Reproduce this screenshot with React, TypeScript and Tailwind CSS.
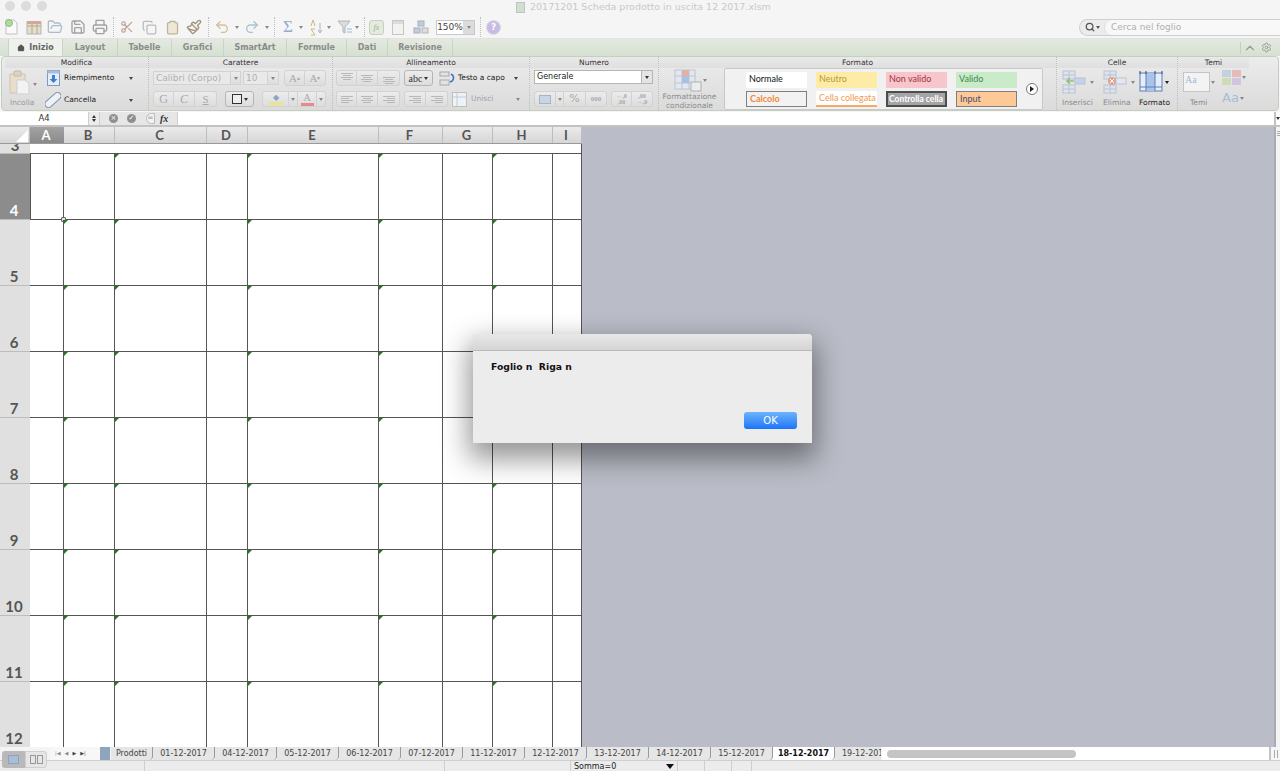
import React from "react";
import {
  Scissors,
  Copy,
  Save,
  Printer,
  Undo2,
  Redo2,
  FolderOpen,
  Paintbrush,
  Search,
  Settings,
  ChevronUp,
  Home,
  Clipboard,
} from "lucide-react";

const colWidths = [34, 51, 92, 41, 131, 64, 50, 60, 29];
const colNames = ["A", "B", "C", "D", "E", "F", "G", "H", "I"];
const rows = [4, 5, 6, 7, 8, 9, 10, 11, 12];
const markedCols = ["B", "C", "E", "F", "H"];
const ribbonTabs = [
  { name: "Layout", w: 55 },
  { name: "Tabelle", w: 54 },
  { name: "Grafici", w: 52 },
  { name: "SmartArt", w: 63 },
  { name: "Formule", w: 60 },
  { name: "Dati", w: 41 },
  { name: "Revisione", w: 65 },
];
const sheets = [
  "01-12-2017",
  "04-12-2017",
  "05-12-2017",
  "06-12-2017",
  "07-12-2017",
  "11-12-2017",
  "12-12-2017",
  "13-12-2017",
  "14-12-2017",
  "15-12-2017",
  "18-12-2017",
];

const Arrow = ({ className = "" }: { className?: string }) => (
  <span
    className={`block w-0 h-0 border-x-[2.5px] border-x-transparent border-t-[3px] border-t-[#888] ${className}`}
  />
);

const Sep = ({ className = "" }: { className?: string }) => (
  <span className={`block w-0 border-l border-dotted border-[#bdbdbd] ${className}`} />
);

const GroupTitle = ({ children }: { children: React.ReactNode }) => (
  <div className="h-[11px] leading-[11px] text-center text-[7.5px] text-[#333] bg-gradient-to-b from-[#e9e9e9] to-[#dfdfdf]">
    {children}
  </div>
);

const Seg = ({ className = "", children }: { className?: string; children?: React.ReactNode }) => (
  <div
    className={`flex items-center justify-center h-[16px] border border-[#d2d2d2] bg-gradient-to-b from-[#ececec] to-[#dddddd] text-[#a9a9a9] ${className}`}
  >
    {children}
  </div>
);

const Lines = ({ align }: { align: "l" | "c" | "r" }) => {
  const a = align === "l" ? "items-start" : align === "c" ? "items-center" : "items-end";
  return (
    <div className={`flex flex-col gap-[1px] w-[12px] ${a}`}>
      <span className="block h-px w-[12px] bg-[#b8b8b8]" />
      <span className="block h-px w-[8px] bg-[#b8b8b8]" />
      <span className="block h-px w-[12px] bg-[#b8b8b8]" />
      <span className="block h-px w-[8px] bg-[#b8b8b8]" />
    </div>
  );
};

const Style = ({ label, className }: { label: string; className: string }) => (
  <div
    className={`w-[61px] h-[16px] pl-[3px] leading-[14px] text-[9px] whitespace-nowrap overflow-hidden font-['Lato',sans-serif] ${className}`}
  >
    {label}
  </div>
);

const GridIcon = ({ tint, kind }: { tint: string; kind: "add" | "del" }) => (
  <svg width="24" height="24" viewBox="0 0 24 24">
    <rect x="1" y="1" width="12" height="8" fill="#dde3ec" stroke="#b9c3d1" />
    <rect x="1" y="15" width="12" height="8" fill="#dde3ec" stroke="#b9c3d1" />
    <path d="M7 1v8M1 5h12M7 15v8M1 19h12" stroke="#b9c3d1" fill="none" />
    <rect x="13" y="8" width="10" height="6" fill={tint} stroke="#b9c3d1" />
    {kind === "add" ? (
      <path d="M12 11H5m3-3l-3 3 3 3" fill="none" stroke="#8fc27a" strokeWidth="1.6" />
    ) : (
      <g>
        <circle cx="9" cy="11" r="4" fill="#dba497" />
        <path d="M7 9l4 4m0-4l-4 4" stroke="#fff" />
      </g>
    )}
  </svg>
);

const Toolbar = () => (
  <div className="h-[22px] flex items-center text-[#a2a2a2] relative">
    <svg className="ml-[4px]" width="15" height="16" viewBox="0 0 15 16">
      <path d="M2 1h8l3 3v11H2z" fill="#fafafa" stroke="#c2c2c2" />
      <circle cx="5" cy="4" r="3.5" fill="#aedb9e" stroke="#8dbd7e" />
    </svg>
    <svg className="ml-[7px]" width="16" height="15" viewBox="0 0 16 15">
      <rect x="1" y="2" width="14" height="12" fill="#e5decd" stroke="#b4b4b4" />
      <path d="M1 6h14M6 2v12M11 2v12" stroke="#b5a88e" />
      <rect x="1" y="1" width="14" height="3" fill="#d4a79b" />
    </svg>
    <FolderOpen className="ml-[5px] text-[#aebcc7]" size={16} />
    <Save className="ml-[7px]" size={16} />
    <Printer className="ml-[6px]" size={16} />
    <Sep className="h-[20px] ml-[5px]" />
    <Scissors className="ml-[6px] text-[#bd9c90]" size={14} />
    <Copy className="ml-[8px] text-[#bbb]" size={15} />
    <Clipboard className="ml-[8px] text-[#c0b299]" size={15} fill="#eee7d8" />
    <Paintbrush className="ml-[6px] text-[#a3937a]" size={16} />
    <Sep className="h-[20px] ml-[6px]" />
    <Undo2 className="ml-[5px] text-[#d2c29c]" size={16} />
    <Arrow className="ml-[5px]" />
    <Redo2 className="ml-[5px] text-[#abc1d0]" size={16} />
    <Arrow className="ml-[5px]" />
    <Sep className="h-[20px] ml-[5px]" />
    <span className="ml-[8px] w-[10px] font-['Liberation_Serif',serif] text-[17px] leading-[16px] text-[#8fabcd]">Σ</span>
    <Arrow className="ml-[6px]" />
    <svg className="ml-[5px]" width="16" height="17" viewBox="0 0 16 17">
      <path d="M3 7l2-6 2 6M3 16h4L3 10h4" fill="none" stroke="#cdb987" />
      <path d="M12 4v9m-2-2l2 3 2-3" fill="none" stroke="#a2b6c8" />
    </svg>
    <Arrow className="ml-[3px]" />
    <svg className="ml-[6px]" width="16" height="14" viewBox="0 0 16 14">
      <path d="M1 1h12L8 7v6L6 12V7z" fill="#d8dde1" stroke="#b4b4b4" />
      <path d="M10 9h5M10 12h5" stroke="#9cbbd8" />
    </svg>
    <Arrow className="ml-[2px]" />
    <Sep className="h-[20px] ml-[5px]" />
    <div className="ml-[4px] w-[15px] h-[15px] rounded-[3px] border border-[#c6d1bd] bg-[#e4ebde] text-[8px] italic text-center leading-[13px] text-[#9aad8c] font-['Liberation_Serif',serif]">
      fx
    </div>
    <div className="ml-[8px] w-[12px] h-[15px] border border-[#c6c6c6] bg-[#f2f2f2]">
      <div className="h-[3px] bg-[#dcdcdc]" />
    </div>
    <svg className="ml-[9px]" width="16" height="14" viewBox="0 0 16 14">
      <rect x="5" y="1" width="6" height="5" fill="#c3cdd9" stroke="#a4b0c1" />
      <rect x="1" y="8" width="6" height="5" fill="#c3cdd9" stroke="#a4b0c1" />
      <rect x="9" y="8" width="6" height="5" fill="#ddd" stroke="#b4b4b4" />
    </svg>
    <div className="ml-[7px] w-[39px] h-[15px] flex border border-[#c9c9c9] bg-white text-[9px] leading-[13px] text-[#444]">
      <span className="w-[26px] text-center">150%</span>
      <span className="flex-1 flex items-center justify-center bg-[#dcdcdc]">
        <Arrow />
      </span>
    </div>
    <Sep className="h-[20px] ml-[5px]" />
    <div className="ml-[5px] w-[15px] h-[15px] rounded-full border border-[#ddd] bg-[#c9bce4] text-[9px] font-bold leading-[13px] text-center text-white">
      ?
    </div>
    <div className="ml-auto w-[201px] h-[17px] flex items-center rounded-l-full border border-r-0 border-[#cfcfcf] bg-[#ececec]">
      <Search className="ml-[5px] text-[#555]" size={10} strokeWidth={3} />
      <Arrow className="ml-[1px] !border-t-[#555]" />
      <div className="ml-[4px] flex-1 h-full rounded-l-full bg-[#f8f8f8] border-l border-[#ddd] pl-[6px] text-[9px] leading-[15px] text-[#b0b0b0]">
        Cerca nel foglio
      </div>
    </div>
  </div>
);

const RibbonTabs = () => (
  <div className="h-[18px] flex bg-gradient-to-b from-[#e4e9e0] to-[#d6e1d2] border-t border-[#e2e2e2] text-[8px] font-bold text-[#8b8b8b]">
    <div className="ml-[8px] w-[55px] flex items-center justify-center gap-[4px] bg-[#eef1ec] border-x border-[#c9d4c4] text-[#666]">
      <Home size={8} fill="#555" strokeWidth={1} />
      Inizio
    </div>
    {ribbonTabs.map((t) => (
      <div
        key={t.name}
        style={{ width: t.w }}
        className="flex items-center justify-center border-r border-[#c9d4c4]"
      >
        {t.name}
      </div>
    ))}
    <div className="ml-auto flex items-center text-[#999]">
      <Sep className="h-[12px] !border-solid !border-[#c5cec1]" />
      <ChevronUp className="ml-[2px]" size={14} />
      <Settings className="ml-[4px]" size={11} />
      <span className="w-[8px]" />
    </div>
  </div>
);

const Ribbon = () => (
  <div className="h-[55px] mx-[1px] flex rounded-[4px] border border-[#c4cfc0] bg-gradient-to-b from-[#ececec] to-[#dbdbdb] text-[#444] overflow-hidden">
    {/* Modifica */}
    <div className="w-[143px] ml-[3px]">
      <GroupTitle>Modifica</GroupTitle>
      <div className="flex">
        <div className="w-[37px] pl-[4px] pt-[2px]">
          <div className="flex items-center">
            <svg width="21" height="25" viewBox="0 0 21 25">
              <path d="M1 4h15v19H1z" fill="#e8decb" stroke="#cfc3ab" />
              <rect x="5" y="1" width="7" height="5" rx="1" fill="#d9d3c8" stroke="#c2b9a8" />
              <path d="M8 10h8l4 4v10H8z" fill="#f3f3f3" stroke="#cfcfcf" />
            </svg>
            <Arrow className="ml-[3px] mt-[3px]" />
          </div>
          <div className="text-[7.5px] text-[#999] mt-[2px] pl-[1px]">Incolla</div>
        </div>
        <div className="flex-1 text-[7.5px] text-[#222]">
          <div className="flex items-center h-[16px] mt-[2px]">
            <svg className="ml-[5px]" width="13" height="16" viewBox="0 0 13 16">
              <rect x="0.5" y="0.5" width="12" height="15" fill="#e6edf6" stroke="#7d9bc2" />
              <rect x="0.5" y="0.5" width="12" height="3" fill="#a8bfdb" />
              <path d="M5 5h3v4h2.5l-4 4-4-4H5z" fill="#3f7fd0" />
            </svg>
            <span className="ml-[4px]">Riempimento</span>
            <Arrow className="ml-auto mr-[15px] !border-t-[#444]" />
          </div>
          <div className="flex items-center h-[16px] mt-[6px]">
            <svg className="ml-[3px]" width="16" height="16" viewBox="0 0 16 16">
              <rect x="-1.5" y="4.5" width="19" height="7" rx="3.5" transform="rotate(-42 8 8)" fill="#eef1f5" stroke="#7d93ad" />
            </svg>
            <span className="ml-[3px]">Cancella</span>
            <Arrow className="ml-auto mr-[15px] !border-t-[#444]" />
          </div>
        </div>
      </div>
    </div>
    <Sep className="h-full" />
    {/* Carattere */}
    <div className="w-[183px]">
      <GroupTitle>Carattere</GroupTitle>
      <div className="px-[4px] pt-[2px] text-[9px] text-[#b0b0b0]">
        <div className="flex items-center h-[16px]">
          <div className="w-[78px] h-[14px] pl-[2px] leading-[13px] bg-[#e9e9e9] border border-[#d2d2d2]">Calibri (Corpo)</div>
          <Seg className="w-[10px] !h-[14px] !border-l-0"><Arrow /></Seg>
          <div className="ml-[2px] w-[25px] h-[14px] pl-[2px] leading-[13px] bg-[#e9e9e9] border border-[#d2d2d2]">10</div>
          <Seg className="w-[11px] !h-[14px] !border-l-0"><Arrow /></Seg>
          <Seg className="ml-[5px] w-[21px] rounded-l-[3px] text-[11px] font-['Liberation_Serif',serif]">A<span className="text-[6px]">▴</span></Seg>
          <Seg className="w-[21px] rounded-r-[3px] !border-l-0 text-[11px] font-['Liberation_Serif',serif]">A<span className="text-[6px]">▾</span></Seg>
        </div>
        <div className="flex items-center mt-[5px] font-['Liberation_Serif',serif] text-[12px]">
          <Seg className="w-[21px] rounded-l-[3px]">G</Seg>
          <Seg className="w-[21px] !border-l-0 italic">C</Seg>
          <Seg className="w-[22px] rounded-r-[3px] !border-l-0 underline text-[11px]">S</Seg>
          <Seg className="ml-[8px] w-[29px] rounded-[3px] !border-[#b5b5b5] gap-[2px]">
            <span className="block w-[10px] h-[10px] border border-[#333] bg-[#eee]" />
            <Arrow className="!border-t-[#333]" />
          </Seg>
          <Seg className="ml-[8px] w-[27px] rounded-l-[3px] gap-[2px]">
            <span className="flex flex-col items-center">
              <span className="text-[8px] leading-[9px] text-[#8ba5c4]">◆</span>
              <span className="block w-[14px] h-[3px] bg-[#ece38a]" />
            </span>
          </Seg>
          <Seg className="w-[9px] !border-l-0"><Arrow /></Seg>
          <Seg className="w-[19px] !border-l-0">
            <span className="flex flex-col items-center">
              <span className="text-[10px] leading-[10px]">A</span>
              <span className="block w-[13px] h-[3px] bg-[#e58a88]" />
            </span>
          </Seg>
          <Seg className="w-[9px] rounded-r-[3px] !border-l-0"><Arrow /></Seg>
        </div>
      </div>
    </div>
    <Sep className="h-full" />
    {/* Allineamento */}
    <div className="w-[196px]">
      <GroupTitle>Allineamento</GroupTitle>
      <div className="px-[3px] pt-[2px]">
        <div className="flex items-center">
          <Seg className="w-[21px] rounded-l-[3px] !items-start pt-[2px]"><Lines align="c" /></Seg>
          <Seg className="w-[21px] !border-l-0"><Lines align="c" /></Seg>
          <Seg className="w-[22px] rounded-r-[3px] !border-l-0 !items-end pb-[1px]"><Lines align="c" /></Seg>
          <Seg className="ml-[4px] w-[29px] rounded-[3px] !border-[#b5b5b5] !text-[#333] text-[10px] font-['Liberation_Serif',serif] gap-[2px]">
            abc<Arrow className="!border-t-[#333]" />
          </Seg>
          <svg className="ml-[6px]" width="16" height="15" viewBox="0 0 16 15">
            <rect x="1" y="1" width="9" height="4" fill="#e3e3e3" stroke="#a8a8a8" />
            <rect x="1" y="9" width="9" height="5" fill="#e3e3e3" stroke="#a8a8a8" />
            <path d="M12 3c4 2 3 7-1 8" fill="none" stroke="#3d77c4" strokeWidth="1.5" />
          </svg>
          <span className="ml-[3px] text-[7.5px] text-[#222]">Testo a capo</span>
          <Arrow className="ml-[9px] !border-t-[#444]" />
        </div>
        <div className="flex items-center mt-[5px]">
          <Seg className="w-[21px] rounded-l-[3px]"><Lines align="l" /></Seg>
          <Seg className="w-[21px] !border-l-0"><Lines align="c" /></Seg>
          <Seg className="w-[22px] rounded-r-[3px] !border-l-0"><Lines align="r" /></Seg>
          <Seg className="ml-[4px] w-[22px] rounded-l-[3px]"><Lines align="r" /></Seg>
          <Seg className="w-[22px] rounded-r-[3px] !border-l-0"><Lines align="r" /></Seg>
          <svg className="ml-[4px]" width="15" height="15" viewBox="0 0 15 15">
            <rect x="0.5" y="0.5" width="14" height="14" fill="#eef2f6" stroke="#bfbfbf" />
            <path d="M5 0.5v14M0.5 5h14" stroke="#bfcbd8" />
          </svg>
          <span className="ml-[4px] text-[7.5px] text-[#a2a2a2]">Unisci</span>
          <Arrow className="ml-[23px]" />
        </div>
      </div>
    </div>
    <Sep className="h-full" />
    {/* Numero */}
    <div className="w-[128px]">
      <GroupTitle>Numero</GroupTitle>
      <div className="px-[4px] pt-[2px]">
        <div className="flex h-[14px] w-[119px] border border-[#b5b5b5] bg-white text-[8px] leading-[12px] text-[#222]">
          <span className="flex-1 pl-[2px]">Generale</span>
          <span className="w-[11px] flex items-center justify-center bg-[#e4e4e4] border-l border-[#b5b5b5]">
            <Arrow className="!border-t-[#333]" />
          </span>
        </div>
        <div className="flex items-center mt-[7px]">
          <Seg className="w-[22px] rounded-l-[3px]">
            <span className="block w-[12px] h-[9px] border border-[#9fb6cc] bg-[#c8d6e3]" />
          </Seg>
          <Seg className="w-[8px] !border-l-0"><Arrow /></Seg>
          <Seg className="w-[22px] !border-l-0 text-[11px]">%</Seg>
          <Seg className="w-[21px] rounded-r-[3px] !border-l-0 text-[7px] font-bold font-['Liberation_Serif',serif]">000</Seg>
          <Seg className="ml-[4px] w-[21px] rounded-l-[3px] flex-col text-[6px] leading-[6px] font-bold font-['Liberation_Serif',serif]">
            <span>←,0</span>
            <span>,00</span>
          </Seg>
          <Seg className="w-[21px] rounded-r-[3px] !border-l-0 flex-col text-[6px] leading-[6px] font-bold font-['Liberation_Serif',serif]">
            <span>,00</span>
            <span>→,0</span>
          </Seg>
        </div>
      </div>
    </div>
    <Sep className="h-full" />
    {/* Formato */}
    <div className="w-[397px]">
      <GroupTitle>Formato</GroupTitle>
      <div className="flex">
        <div className="w-[65px] flex flex-col items-center pt-[1px] pr-[4px] text-[7.5px] leading-[9px] text-[#8a8a8a]">
          <div className="flex items-center h-[22px] ml-[2px]">
            <svg width="28" height="23" viewBox="0 0 28 23">
              <rect x="1" y="1" width="20" height="19" fill="#e3e8f0" stroke="#bcc4d1" />
              <path d="M8 1v19M15 1v19M1 7h20M1 14h20" stroke="#bcc4d1" />
              <rect x="8" y="1" width="7" height="6" fill="#dfb1a9" />
              <rect x="8" y="7" width="7" height="7" fill="#aac0e0" />
              <rect x="17" y="13" width="10" height="9" fill="#ececec" stroke="#b0b0b0" />
            </svg>
            <Arrow className="ml-[1px]" />
          </div>
          <div className="mt-[1px] text-center">
            Formattazione
            <br />
            condizionale
          </div>
        </div>
        <div className="w-[319px] h-[42px] flex flex-col gap-[3px] pt-[3px] pl-[21px] relative border border-[#c8c8c8] rounded-[2px] bg-[#f1f1f1]">
          <div className="flex gap-[9px]">
            <Style label="Normale" className="bg-white text-[#111]" />
            <Style label="Neutro" className="bg-[#fdeca6] text-[#b99a3c]" />
            <Style label="Non valido" className="bg-[#f6c6cc] text-[#a7323a]" />
            <Style label="Valido" className="bg-[#c9ebc9] text-[#3f8a45]" />
          </div>
          <div className="flex gap-[9px]">
            <Style label="Calcolo" className="bg-[#f2f2f2] border border-[#7f7f7f] text-[#ee8a3a] font-bold !leading-[13px]" />
            <Style label="Cella collegata" className="bg-white border-b-2 border-[#f4a86a] text-[#f09a4f]" />
            <Style label="Controlla cella" className="bg-[#a5a5a5] border-2 border-[#4d4d4d] text-white font-bold !leading-[12px] !pl-[1px] !text-[8.5px]" />
            <Style label="Input" className="bg-[#fdc997] border border-[#7f7f7f] text-[#4a4a70] !leading-[13px]" />
          </div>
          <div className="absolute left-[301px] top-[14px] w-[12px] h-[12px] rounded-full border border-[#777] bg-white flex items-center justify-center">
            <span className="block w-0 h-0 border-y-[3px] border-y-transparent border-l-[4px] border-l-[#222]" />
          </div>
        </div>
      </div>
    </div>
    <Sep className="h-full" />
    {/* Celle */}
    <div className="w-[120px]">
      <GroupTitle>Celle</GroupTitle>
      <div className="flex pl-[5px] pt-[2px] text-[7.5px] text-[#8a8a8a]">
        <div className="w-[41px]">
          <div className="flex items-center h-[24px]">
            <GridIcon tint="#c3d2e6" kind="add" />
            <Arrow className="ml-[4px]" />
          </div>
          <div className="mt-[3px]">Inserisci</div>
        </div>
        <div className="w-[36px]">
          <div className="flex items-center h-[24px]">
            <GridIcon tint="#e4e8ef" kind="del" />
            <Arrow className="ml-[4px]" />
          </div>
          <div className="mt-[3px]">Elimina</div>
        </div>
        <div className="text-[#222]">
          <div className="flex items-center h-[24px]">
            <svg width="24" height="24" viewBox="0 0 24 24">
              <rect x="1" y="3" width="22" height="18" fill="#e6edf8" stroke="#5d7fb8" />
              <rect x="7" y="3" width="9" height="18" fill="#a9c3ea" />
              <path d="M7 3v18M16 3v18M1 17h22" stroke="#5d7fb8" />
              <path d="M1 1v3M7 1v3M16 1v3M23 1v3" stroke="#33446b" />
            </svg>
            <Arrow className="ml-[2px] !border-t-[#222]" />
          </div>
          <div className="mt-[3px]">Formato</div>
        </div>
      </div>
    </div>
    <Sep className="h-full" />
    {/* Temi */}
    <div className="w-[71px]">
      <GroupTitle>Temi</GroupTitle>
      <div className="flex pl-[5px] pt-[2px] text-[7.5px] text-[#8a8a8a]">
        <div className="w-[39px]">
          <div className="flex items-center h-[24px]">
            <div className="w-[27px] h-[20px] border border-[#c5c5c5] bg-[#f3f3f3] text-[10px] leading-[13px] pl-[1px] text-[#a5b9d3] font-['Liberation_Serif',serif]">
              Aa
            </div>
            <Arrow className="ml-[1px]" />
          </div>
          <div className="mt-[3px] pl-[7px]">Temi</div>
        </div>
        <div>
          <div className="flex items-center">
            <div className="grid grid-cols-2 gap-[1px]">
              <span className="block w-[9px] h-[7px] bg-[#c3d0e0]" />
              <span className="block w-[9px] h-[7px] bg-[#e4bbb6]" />
              <span className="block w-[9px] h-[7px] bg-[#ccdcb6]" />
              <span className="block w-[9px] h-[7px] bg-[#d1c5df]" />
            </div>
            <Arrow className="ml-[1px]" />
          </div>
          <div className="flex items-center mt-[6px] text-[13px] leading-[14px] text-[#a5bdd8]">
            Aa
            <Arrow className="ml-[1px]" />
          </div>
        </div>
      </div>
    </div>
  </div>
);

const FormulaBar = () => (
  <div className="h-[15px] mt-[1px] flex bg-white border-b-2 border-[#c2c2c2] text-[#555]">
    <div className="w-[88px] text-center text-[8.5px] leading-[13px] text-[#333]">A4</div>
    <div className="w-[12px] flex flex-col items-center justify-center gap-[1px] bg-[#ececec] border-x border-[#cfcfcf]">
      <span className="block w-0 h-0 border-x-[2px] border-x-transparent border-b-[3px] border-b-[#333]" />
      <span className="block w-0 h-0 border-x-[2px] border-x-transparent border-t-[3px] border-t-[#333]" />
    </div>
    <div className="w-[78px] flex items-center bg-[#e6e6e6] border-r border-[#cfcfcf]">
      <span className="ml-[9px] w-[9px] h-[9px] rounded-full bg-[#8e8e8e] text-white text-[7px] leading-[9px] text-center">×</span>
      <span className="ml-[9px] w-[9px] h-[9px] rounded-full bg-[#8e8e8e] text-white text-[7px] leading-[9px] text-center">✓</span>
      <span className="ml-[10px] w-[9px] h-[11px] rounded-l-full border border-[#bbb] bg-[#f2f2f2] text-[7px] leading-[8px] text-center text-[#999]">=</span>
      <span className="ml-[5px] font-['Liberation_Serif',serif] italic font-bold text-[10px] leading-[12px] text-[#333]">fx</span>
    </div>
    <div className="flex-1" />
    <div className="w-[6px] flex items-center justify-center border-l-2 border-[#c2c2c2]">
      <Arrow className="!border-t-[#333]" />
    </div>
  </div>
);

const ColumnHeaders = () => (
  <div className="h-[17px] flex border-b border-[#9a9a9a] bg-gradient-to-b from-[#ebebeb] to-[#d6d6d6] font-['Lato',sans-serif] font-bold text-[13px] leading-[16px] text-[#555]">
    <div className="w-[30px] flex items-end justify-end pr-[1px] pb-[1px] border-r border-[#bdbdbd]">
      <span className="block w-0 h-0 border-l-[12px] border-l-transparent border-b-[12px] border-b-white" />
    </div>
    {colNames.map((c, i) => (
      <div
        key={c}
        style={{ width: colWidths[i] }}
        className={
          c === "A"
            ? "text-center pr-[2px] bg-gradient-to-b from-[#a3a3a3] to-[#8a8a8a] text-white"
            : "text-center pr-[2px] border-r border-[#bdbdbd]"
        }
      >
        {c}
      </div>
    ))}
  </div>
);

const Sheet = () => (
  <div className="h-[603px] flex overflow-hidden">
    <div className="w-[30px] shrink-0 bg-[#e0e0e0] font-['Lato',sans-serif] font-bold text-[15px] text-[#555]">
      <div className="h-[10px] overflow-hidden flex items-end justify-center leading-[15px] border-b border-[#bdbdbd]">
        <span className="block">3</span>
      </div>
      {rows.map((r) => (
        <div
          key={r}
          className={`h-[66px] flex items-end justify-center leading-[17px] pr-[2px] border-b border-[#bdbdbd] ${
            r === 4 ? "bg-[#8c8c8c] text-white" : ""
          } ${r === 12 ? "!h-[65px] border-b-0" : ""}`}
        >
          {r}
        </div>
      ))}
    </div>
    <div className="w-[552px] shrink-0 bg-white border-r border-[#555]">
      <div className="h-[10px] border-b border-[#555]" />
      {rows.map((r) => (
        <div key={r} className={`flex ${r === 12 ? "h-[65px]" : "h-[66px] border-b border-[#555]"}`}>
          {colNames.map((c, i) => (
            <div
              key={c}
              style={{ width: colWidths[i] }}
              className={`relative shrink-0 ${c === "I" ? "" : "border-r border-[#555]"}`}
            >
              {markedCols.includes(c) && !(r === 4 && c === "B") && (
                <span className="absolute left-0 top-0 w-0 h-0 border-t-[4px] border-t-[#1f7a1f] border-r-[4px] border-r-transparent" />
              )}
              {r === 4 && c === "A" && (
                <>
                  <span className="absolute inset-y-0 left-0 w-px bg-[#555]" />
                  <span className="absolute -right-[3px] -bottom-[3px] w-[5px] h-[5px] rounded-[1px] border border-[#666] bg-[#ddd]" />
                </>
              )}
            </div>
          ))}
        </div>
      ))}
    </div>
  </div>
);

const Tabs = () => (
  <div className="h-[14px] flex bg-[#f4f4f4] border-b border-[#cfcfcf]">
    <div className="w-[50px]" />
    <div className="w-[50px] flex items-center gap-[4px] pl-[5px] bg-[#f7f7f7] text-[5px] text-[#888]">
      <span>|◀</span>
      <span>◀</span>
      <span className="text-[#444]">▶</span>
      <span className="text-[#444]">▶|</span>
    </div>
    <div className="w-[10px] bg-[#8fa4bf]" />
    <div className="w-[772px] flex overflow-hidden text-[8px] leading-[14px] text-[#444]">
      <div className="w-[42px] shrink-0 text-center bg-[#e6e6e6] rounded-br-[4px] border-r border-[#999] ml-[1px]">
        Prodotti
      </div>
      {sheets.map((s) => (
        <div
          key={s}
          className={`w-[62px] shrink-0 text-center rounded-br-[4px] border-r border-[#999] ${
            s === "18-12-2017" ? "bg-white font-bold text-[#111]" : "bg-[#e6e6e6]"
          }`}
        >
          {s}
        </div>
      ))}
      <div className="w-[46px] shrink-0 overflow-hidden whitespace-nowrap pl-[7px] bg-[#e6e6e6]">19-12-2017</div>
    </div>
    <div className="flex-1 flex items-center bg-white pl-[5px]">
      <div className="w-[189px] h-[8px] rounded-full bg-[#c4c4c4]" />
      <div className="ml-auto w-[11px] h-full flex items-center justify-center border-l-2 border-[#c2c2c2] bg-[#f6f6f6]">
        <span className="block w-[4px] h-[8px] border-x border-[#aaa]" />
      </div>
    </div>
  </div>
);

const StatusBar = () => (
  <div className="relative h-[10px] flex bg-[#ececec] text-[8px] leading-[11px] text-[#222] overflow-hidden">
    <div className="w-[145px] border-r border-[#cfcfcf]" />
    <div className="w-[300px] border-r border-[#cfcfcf]" />
    <div className="w-[126px] border-r border-[#cfcfcf]" />
    <div className="w-[107px] flex items-center pl-[3px] border-r border-[#cfcfcf]">
      Somma=0
      <Arrow className="ml-auto mr-[3px] !border-t-[#111] !border-x-[4px] !border-t-[5px]" />
    </div>
    <div className="w-[27px] border-r border-[#cfcfcf]" />
    <div className="w-[27px] border-r border-[#cfcfcf]" />
    <div className="w-[20px] border-r border-[#cfcfcf]" />
  </div>
);

const ViewButtons = () => (
  <div className="absolute left-[2px] top-[751px] flex">
    <div className="w-[23px] h-[17px] flex items-center justify-center rounded-l-[3px] bg-[#b9b9b9]">
      <span className="block w-[11px] h-[9px] bg-[#a9bdd9] border border-[#8ea3bf]" />
    </div>
    <div className="w-[22px] h-[17px] flex items-center justify-center gap-[1px] rounded-r-[3px] bg-[#e6e6e6] border border-[#cfcfcf]">
      <span className="block w-[6px] h-[9px] border border-[#999]" />
      <span className="block w-[6px] h-[9px] border border-[#999]" />
    </div>
  </div>
);

const Dialog = () => (
  <div className="absolute left-[473px] top-[334px] w-[339px] h-[109px] flex flex-col rounded-t-[4px] bg-[#ececec] shadow-[0_12px_28px_4px_rgba(0,0,0,0.42)]">
    <div className="h-[17px] rounded-t-[4px] bg-gradient-to-b from-[#e8e8e8] to-[#d5d5d5] border-b border-[#b9b9b9]" />
    <div className="pl-[18px] pt-[9px] text-[9.25px] leading-[13px] font-bold text-[#111] whitespace-pre">
      Foglio n  Riga n
    </div>
    <div className="mt-auto mb-[14px] mr-[15px] ml-auto w-[53px] h-[17px] rounded-[3px] bg-gradient-to-b from-[#6db3fb] to-[#1b73f8] text-center text-[10px] leading-[17px] text-white">
      OK
    </div>
  </div>
);

export default function App() {
  return (
    <div className="relative w-[1280px] h-[771px] overflow-hidden flex flex-col bg-[#f5f5f5] font-['DejaVu_Sans',sans-serif]">
      <div className="h-[16px] flex items-start text-[9.5px] leading-[14px] text-[#c9c9c9] shrink-0">
        <div className="flex gap-[6px] pl-[5px] pt-[1px]">
          <span className="block w-[10px] h-[10px] rounded-full bg-[#dcdcdc]" />
          <span className="block w-[10px] h-[10px] rounded-full bg-[#dcdcdc]" />
          <span className="block w-[10px] h-[10px] rounded-full bg-[#dcdcdc]" />
        </div>
        <div className="ml-[469px] flex items-center gap-[5px] whitespace-nowrap">
          <span className="block w-[9px] h-[11px] bg-[#cfe0cf] border border-[#c2c2c2]" />
          20171201 Scheda prodotto in uscita 12 2017.xlsm
        </div>
      </div>
      <Toolbar />
      <RibbonTabs />
      <Ribbon />
      <FormulaBar />
      <div className="h-[620px] flex bg-[#babcc7]">
        <div className="w-[582px] shrink-0 flex flex-col">
          <ColumnHeaders />
          <Sheet />
        </div>
        <div className="flex-1" />
        <div className="w-[6px] pt-[4px] flex flex-col items-center gap-[1px] bg-[#f4f4f4] border-l-2 border-[#a9abb3]">
          <span className="block w-[3px] h-px bg-[#aaa]" />
          <span className="block w-[3px] h-px bg-[#aaa]" />
          <span className="block w-[3px] h-px bg-[#aaa]" />
        </div>
      </div>
      <Tabs />
      <StatusBar />
      <ViewButtons />
      <Dialog />
    </div>
  );
}
